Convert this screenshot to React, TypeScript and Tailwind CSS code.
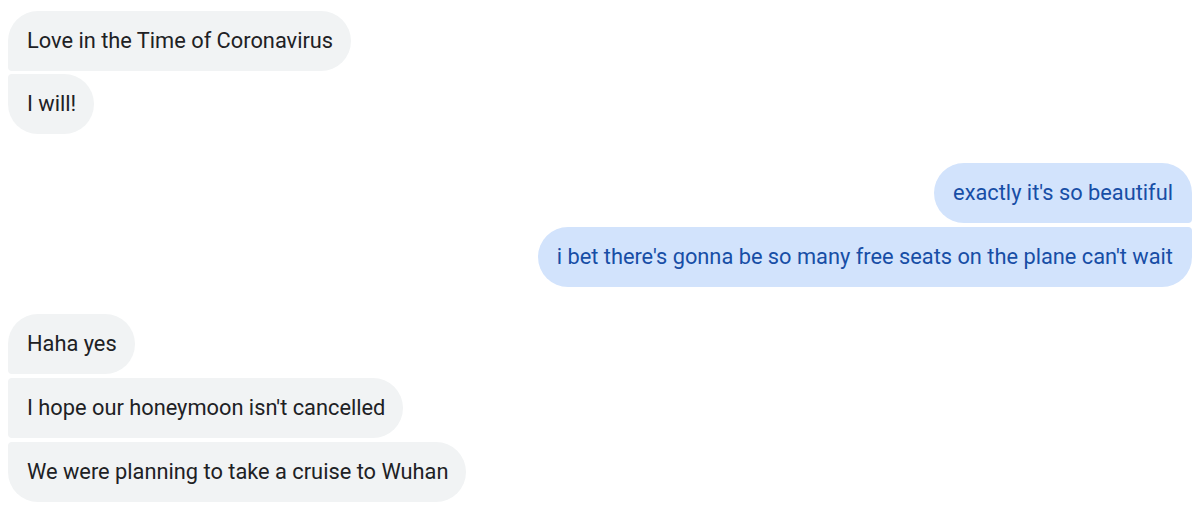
import React from "react";

function In({ text, pos }: { text: string; pos: "first" | "mid" | "last" }) {
  const r =
    pos === "first"
      ? "rounded-[30px] rounded-bl-[4px]"
      : pos === "mid"
      ? "rounded-[30px] rounded-tl-[4px] rounded-bl-[4px]"
      : "rounded-[30px] rounded-tl-[4px]";
  return (
    <div className="flex justify-start">
      <div className={`h-[60px] flex items-center pl-[19px] pr-[18px] bg-[#f1f3f4] text-[#202124] text-[21.8px] ${r}`}>
        {text}
      </div>
    </div>
  );
}

function Out({ text, pos }: { text: string; pos: "first" | "last" }) {
  const r =
    pos === "first"
      ? "rounded-[30px] rounded-br-[4px]"
      : "rounded-[30px] rounded-tr-[4px]";
  return (
    <div className="flex justify-end">
      <div className={`h-[60px] flex items-center pl-[19px] pr-[19px] bg-[#d2e3fc] text-[#174ea6] text-[21.8px] ${r}`}>
        {text}
      </div>
    </div>
  );
}

export default function App() {
  return (
    <div
      className="w-[1200px] h-[511px] bg-white pl-[8px] pr-[8px] pt-[11px] flex flex-col"
      style={{ fontFamily: "Roboto, 'Liberation Sans', sans-serif" }}
    >
      <div className="flex flex-col gap-[3px]">
        <In text="Love in the Time of Coronavirus" pos="first" />
        <In text="I will!" pos="last" />
      </div>
      <div className="flex flex-col gap-[4px] mt-[29px]">
        <Out text="exactly it's so beautiful" pos="first" />
        <Out text="i bet there's gonna be so many free seats on the plane can't wait" pos="last" />
      </div>
      <div className="flex flex-col gap-[4px] mt-[27px]">
        <In text="Haha yes" pos="first" />
        <In text="I hope our honeymoon isn't cancelled" pos="mid" />
        <In text="We were planning to take a cruise to Wuhan" pos="last" />
      </div>
    </div>
  );
}
